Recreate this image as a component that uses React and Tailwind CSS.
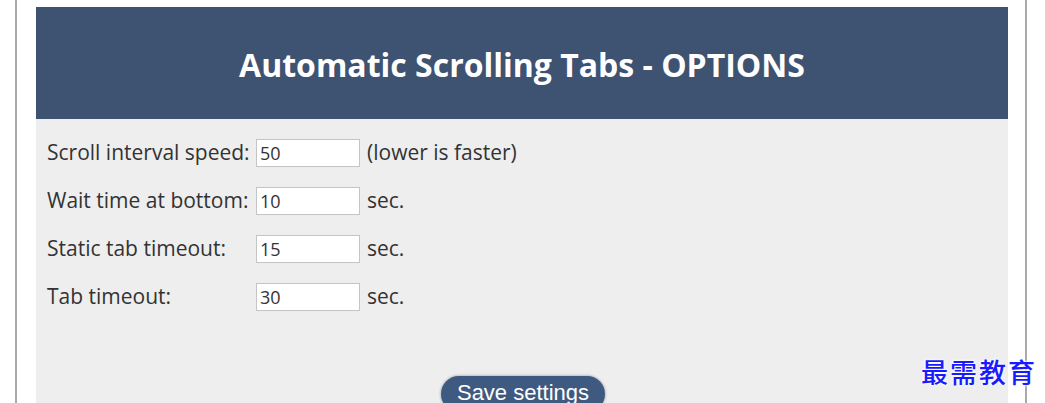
import React from 'react';

const fields = [
  { label: 'Scroll interval speed:', value: '50', hint: '(lower is faster)' },
  { label: 'Wait time at bottom:', value: '10', hint: 'sec.' },
  { label: 'Static tab timeout:', value: '15', hint: 'sec.' },
  { label: 'Tab timeout:', value: '30', hint: 'sec.' },
];

function App() {
  return (
    <div className="relative h-[403px] w-[1045px] overflow-hidden bg-white">
      {/* Framed options page */}
      <div className="ml-[15px] h-full w-[1012px] border-x-2 border-[#a9a9a9] pl-[19px] pr-[17px] pt-[7px]">
        <div className="h-full bg-[#eeeeee]">
          <div className="flex h-[112px] items-center justify-center bg-[#3e5272] pt-1">
            <h1 className="font-['Open_Sans',sans-serif] text-[32px] font-bold text-white">
              Automatic Scrolling Tabs - OPTIONS
            </h1>
          </div>

          <div className="flex flex-col gap-5 pl-[11px] pt-5 font-['Open_Sans',sans-serif] text-[21px] text-[#333]">
            {fields.map((f) => (
              <div key={f.label} className="flex h-7 items-center">
                <span className="w-[209px] whitespace-nowrap">{f.label}</span>
                <input
                  defaultValue={f.value}
                  className="h-7 w-[104px] border border-[#c4c4c4] bg-white px-[3px] font-['Open_Sans',sans-serif] text-[18px] text-[#333] outline-none"
                />
                <span className="ml-[7px]">{f.hint}</span>
              </div>
            ))}
          </div>

          <div className="mt-[65px] flex justify-center">
            <button className="ml-[2px] h-9 w-[164px] rounded-full bg-[#3e5a80] pb-1 font-['Liberation_Sans',sans-serif] text-[22px] text-white shadow-[0_0_3px_rgba(0,0,0,0.4)]">
              Save settings
            </button>
          </div>
        </div>
      </div>

      {/* watermark */}
      <div className="absolute left-[921px] top-[352px] font-['Noto_Sans_CJK_SC',serif] text-[27px] font-medium tracking-[2px] text-[#1a1aff] [text-shadow:0_0_3px_#fff,0_0_3px_#fff]">
        最需教育
      </div>
    </div>
  );
}

export default App;
